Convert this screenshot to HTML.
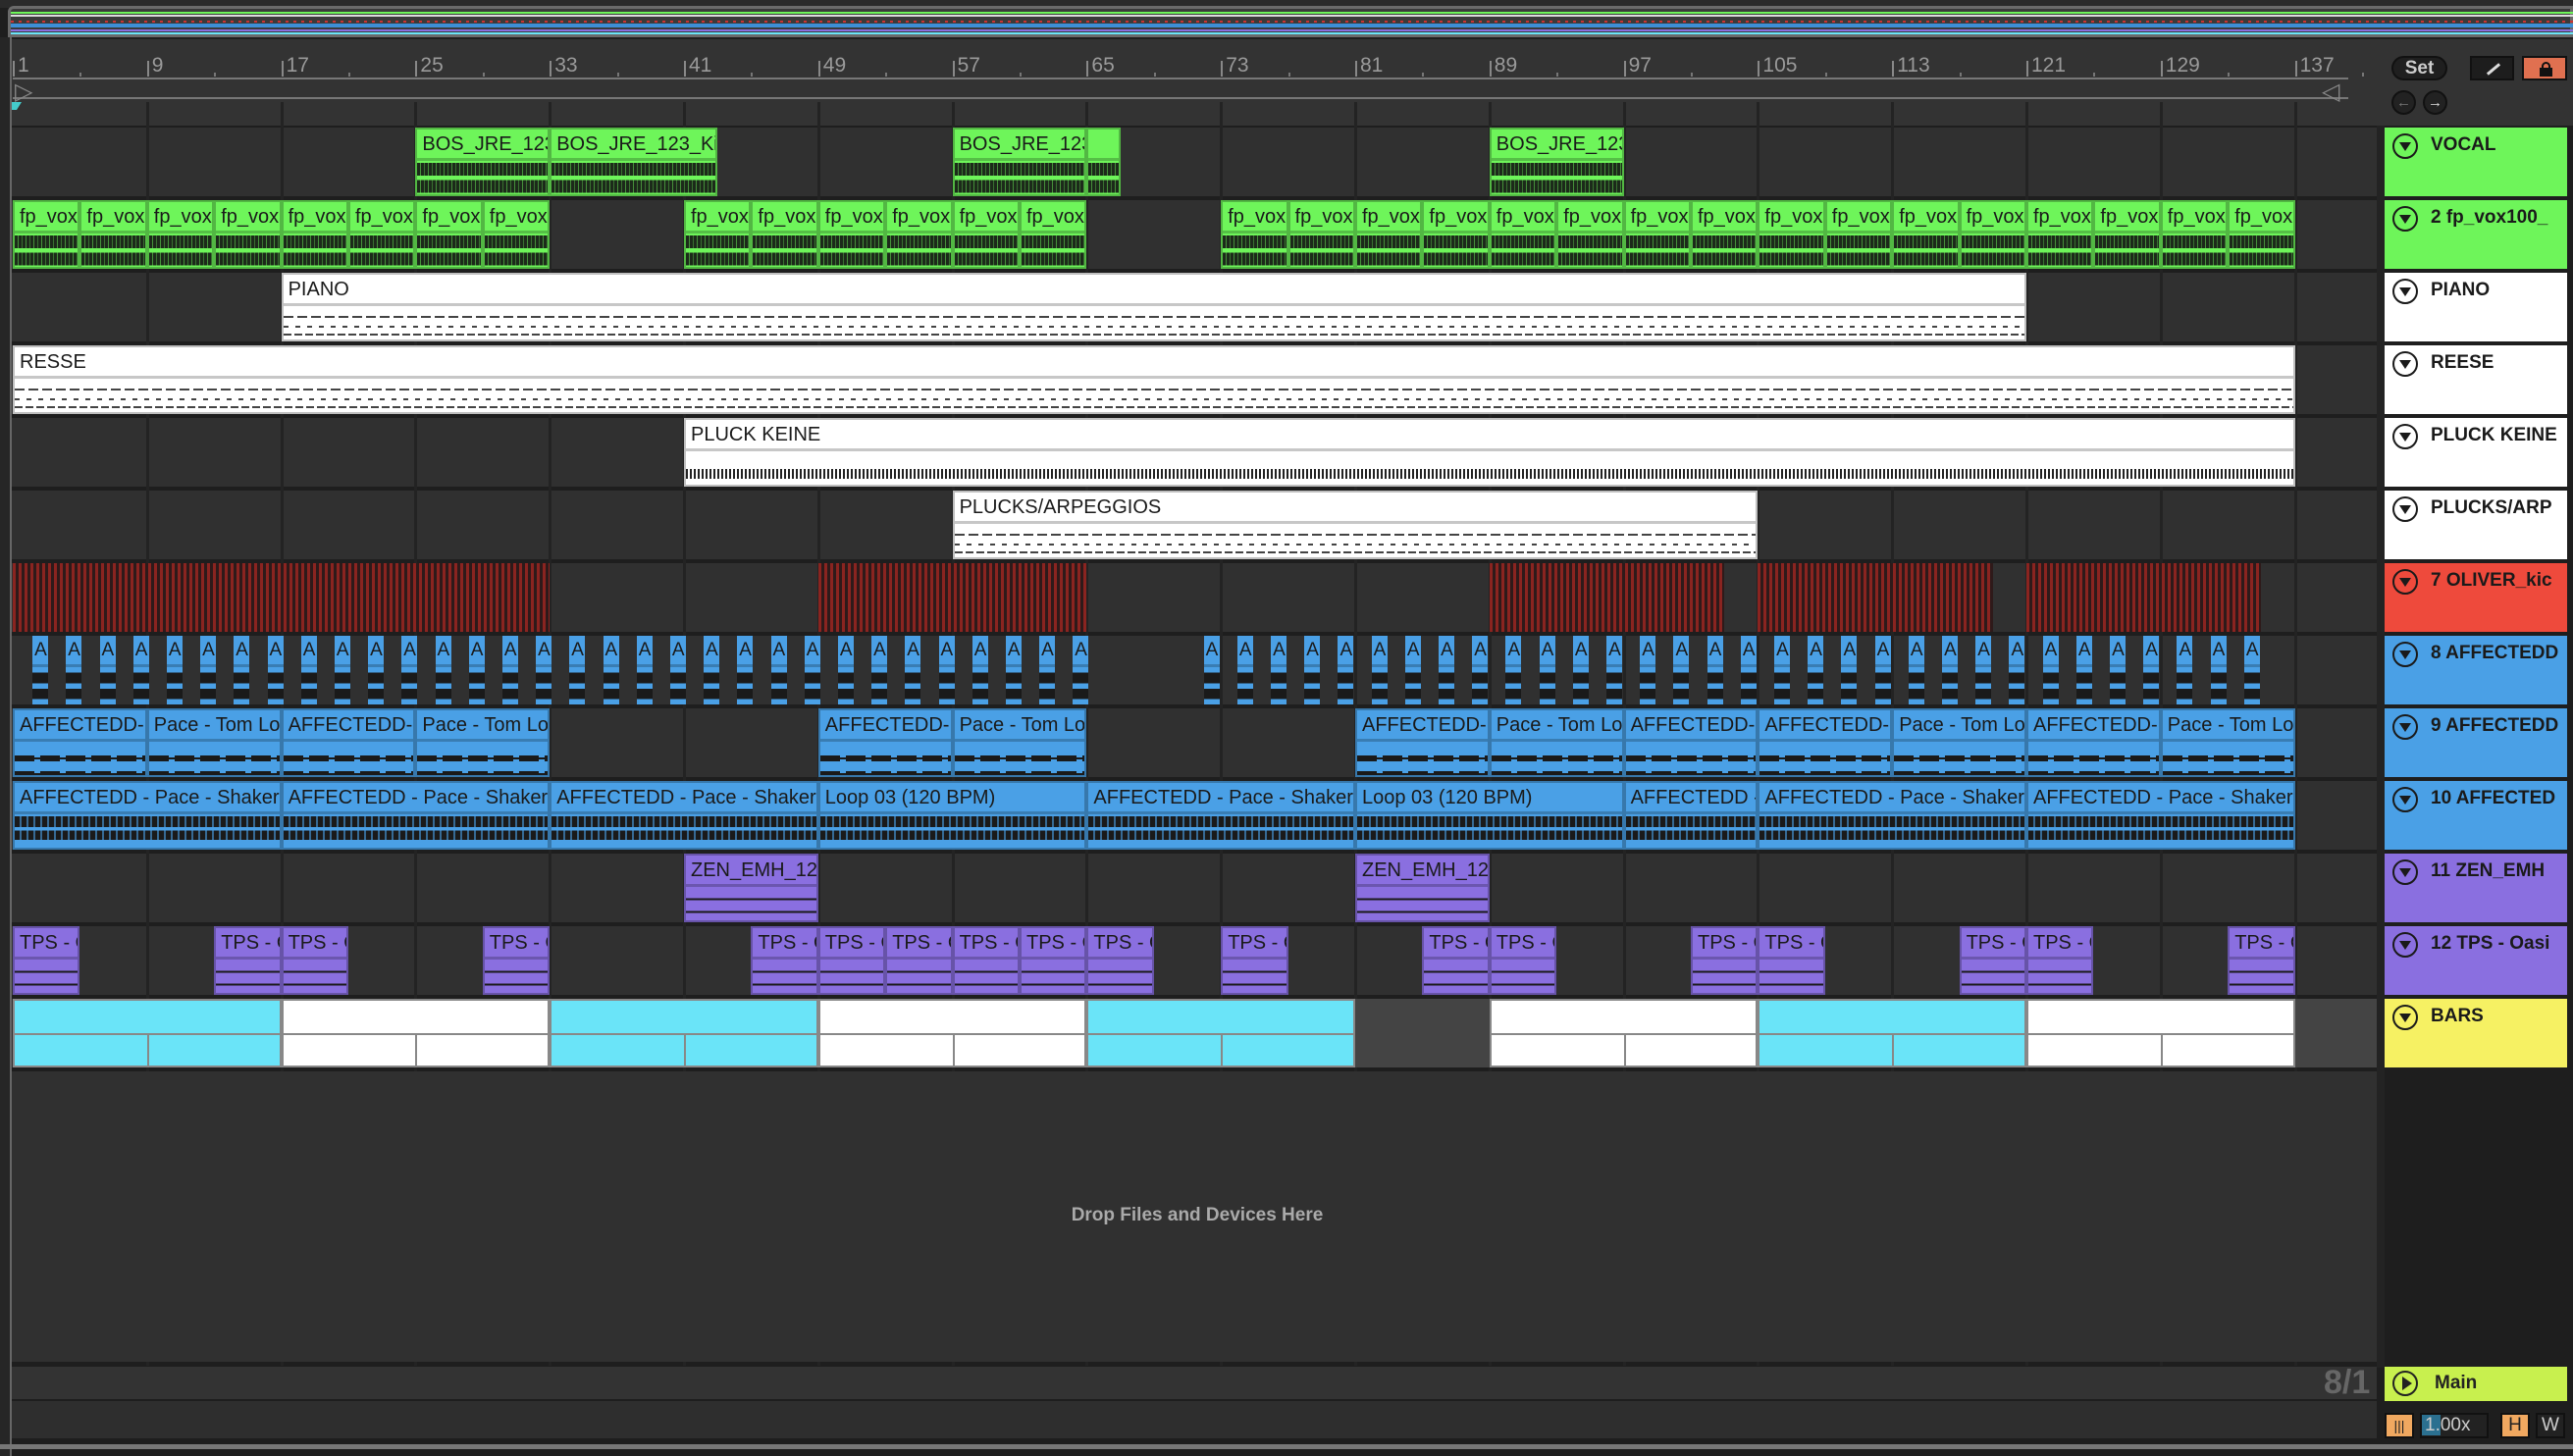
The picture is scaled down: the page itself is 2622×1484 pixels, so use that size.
<!DOCTYPE html>
<html><head><meta charset="utf-8">
<style>
*{margin:0;padding:0;box-sizing:border-box}
body{width:2622px;height:1484px;background:#1e1e1e;position:relative;overflow:hidden;font-family:"Liberation Sans",sans-serif}
.a{position:absolute}
.clip{position:absolute;overflow:hidden;border:2px solid rgba(0,0,0,.25)}
.clip .h{height:32px;line-height:30px;font-size:20px;padding-left:5px;white-space:nowrap;overflow:hidden;color:#1a1a1a;border-bottom:3px solid rgba(0,0,0,.22)}
.clip .w{position:absolute;left:0;right:0;top:34px;bottom:0}
.th{position:absolute;left:2430px;width:186px;height:70px;font-weight:bold;font-size:19px;color:#1a1a1a}
.th .c{position:absolute;left:8px;top:6px;width:26px;height:26px;border:2.5px solid #1a1a1a;border-radius:50%}
.th .c:after{content:"";position:absolute;left:5px;top:7px;border-left:6px solid transparent;border-right:6px solid transparent;border-top:9px solid #1a1a1a}
.th span{position:absolute;left:47px;top:7px;white-space:nowrap}
.rn{position:absolute;top:55px;font-size:21px;color:#9a9a9a}
.tn{position:absolute;top:1432px;font-size:20px;color:#9a9a9a}
</style></head><body>
<div class="a" style="left:0;top:0;width:2622px;height:8px;background:#2a2a2a"></div>
<div class="a" style="left:8px;top:6px;width:2614px;height:32px;background:#3a3a3a;border:3px solid #6a6a6a;border-radius:6px 0 0 0"></div>
<div class="a" style="left:11px;top:12px;width:2611px;height:2px;background:#6ef55a"></div>
<div class="a" style="left:11px;top:15px;width:2611px;height:2px;background:#ddd"></div>
<div class="a" style="left:11px;top:21px;width:2611px;height:2px;background:repeating-linear-gradient(90deg,#c33 0 3px,transparent 3px 8px)"></div>
<div class="a" style="left:11px;top:24px;width:2611px;height:4px;background:#3d8fd6"></div>
<div class="a" style="left:11px;top:30px;width:2611px;height:2px;background:#8a6fe0"></div>
<div class="a" style="left:11px;top:33px;width:2611px;height:2px;background:#6ae4f8"></div>
<div class="a" style="left:0;top:38px;width:12px;height:1446px;background:#262626;border-right:2px solid #666"></div>
<div class="a" style="left:12px;top:40px;width:2410px;height:88px;background:#333"></div>
<div class="a" style="left:13px;top:79px;width:2380px;height:22px;border:2px solid #777;border-width:2px 0"></div>
<div class="a" style="left:15px;top:79px;color:#888;font-size:24px">&#9655;</div>
<div class="a" style="left:2366px;top:79px;color:#888;font-size:24px">&#9665;</div>
<div class="a" style="left:12px;top:104px;width:0;height:0;border-left:5px solid #4cc;border-right:5px solid transparent;border-top:8px solid #4cc"></div>
<div id="lanes"></div>
<div class="a" style="left:12px;top:1092px;width:2410px;height:296px;background:#303030"></div>
<div class="a" style="left:1220px;top:1228px;width:0"><div style="position:absolute;transform:translateX(-50%);white-space:nowrap;color:#aaa;font-size:19px;font-weight:bold">Drop Files and Devices Here</div></div>
<div class="a" style="left:12px;top:1393px;width:2410px;height:33px;background:#333"></div>
<div class="a" style="left:2368px;top:1390px;font-size:34px;font-weight:bold;color:#666">8/1</div>
<div class="a" style="left:12px;top:1428px;width:2410px;height:38px;background:#2e2e2e"></div>
<div class="a" style="left:0;top:1472px;width:2622px;height:5px;background:#777"></div>
<div class="a" style="left:2422px;top:40px;width:200px;height:88px;background:#333"></div>
<div class="a" style="left:2437px;top:57px;width:57px;height:25px;border-radius:13px;background:#1f1f1f;border:2px solid #111;color:#ccc;font-size:19px;text-align:center;line-height:21px;font-weight:bold">Set</div>
<div class="a" style="left:2517px;top:57px;width:45px;height:25px;background:#1d1d1d;border:2px solid #111"><div style="position:absolute;left:14px;top:10px;width:16px;height:3px;background:#ddd;transform:rotate(-40deg)"></div></div>
<div class="a" style="left:2570px;top:57px;width:46px;height:25px;background:#e07050;border:2px solid #111"><div style="position:absolute;left:16px;top:10px;width:13px;height:9px;background:#111"></div><div style="position:absolute;left:18px;top:4px;width:9px;height:8px;border:2px solid #111;border-radius:5px 5px 0 0"></div></div>
<div class="a" style="left:2437px;top:92px;width:25px;height:25px;border-radius:50%;background:#222;border:2px solid #111;color:#777;font-size:15px;text-align:center;line-height:21px">&#8592;</div>
<div class="a" style="left:2469px;top:92px;width:25px;height:25px;border-radius:50%;background:#222;border:2px solid #111;color:#ddd;font-size:15px;text-align:center;line-height:21px">&#8594;</div>
<div class="a" style="left:2430px;top:1393px;width:186px;height:35px;background:#c8f04e"><div style="position:absolute;left:8px;top:4px;width:26px;height:26px;border:2.5px solid #222;border-radius:50%"></div><div style="position:absolute;left:18px;top:10px;border-top:7px solid transparent;border-bottom:7px solid transparent;border-left:10px solid #222"></div><span style="position:absolute;left:51px;top:6px;font-size:19px;font-weight:bold;color:#222">Main</span></div>
<div class="a" style="left:2430px;top:1440px;width:30px;height:26px;background:#f0a860;border:2px solid #111;color:#222;font-size:14px;text-align:center;line-height:22px">|||</div>
<div class="a" style="left:2466px;top:1440px;width:70px;height:26px;background:#222;border:2px solid #111;color:#ccc;font-size:19px;line-height:22px"><span style="background:#2b7090;padding-left:3px">1.</span>00x</div>
<div class="a" style="left:2548px;top:1440px;width:30px;height:26px;background:#f0a860;border:2px solid #111;color:#222;font-size:19px;text-align:center;line-height:22px">H</div>
<div class="a" style="left:2584px;top:1440px;width:30px;height:26px;background:#222;border:2px solid #111;color:#ccc;font-size:19px;text-align:center;line-height:22px">W</div>
<script>
var B=function(b){return 13+(b-1)*17.1};
var H='';
var tops=[];for(var k=0;k<13;k++)tops.push(130+74*k);
for(var k=0;k<13;k++){H+='<div class="a" style="left:12px;top:'+tops[k]+'px;width:2410px;height:70px;background:#303030"></div>';}
for(var b=9;b<=137;b+=8){H+='<div class="a" style="left:'+(B(b)-1)+'px;top:104px;width:3px;height:1288px;background:#232323"></div>';}
H+='<div class="a" style="left:2422px;top:104px;width:8px;height:1290px;background:#232323"></div>';
for(var b=1;b<=137;b+=8){H+='<div class="rn" style="left:'+(B(b)+5)+'px">'+b+'</div><div class="a" style="left:'+B(b)+'px;top:62px;width:2px;height:16px;background:#888"></div><div class="a" style="left:'+B(b+4)+'px;top:74px;width:2px;height:4px;background:#777"></div>';}
var tl=['0:00','0:20','0:40','1:00','1:20','1:40','2:00','2:20','2:40','3:00','3:20','3:40','4:00','4:20'];
for(var i=0;i<tl.length;i++){var x=16+i*175.2;H+='<div class="tn" style="left:'+(x+4)+'px">'+tl[i]+'</div><div class="a" style="left:'+x+'px;top:1430px;width:2px;height:10px;background:#888"></div>';}
var C={g:'#6ef55a',w:'#ffffff',b:'#4aa0e6',p:'#8a6fe0'};
var noise='repeating-linear-gradient(90deg,rgba(0,0,0,0) 0 3px,rgba(110,245,90,.5) 3px 4px,rgba(0,0,0,0) 4px 7px,rgba(110,245,90,.35) 7px 8px)';
function clip(k,b1,b2,name,c){var l=B(b1),r=B(b2);var wv='';
 if(c=='g')wv='<div class="w" style="background:'+noise+',linear-gradient(180deg,#1c2a1a 0 40%,#6ef55a 40% 55%,#1c2a1a 55% 95%,#6ef55a 95%)"></div>';
 if(c=='w')wv='<div class="w" style="top:42px;height:2px;background:repeating-linear-gradient(90deg,#444 0 10px,#fff 10px 14px)"></div><div class="w" style="top:52px;height:2px;background:repeating-linear-gradient(90deg,#444 0 5px,#fff 5px 12px)"></div><div class="w" style="top:60px;height:2px;background:repeating-linear-gradient(90deg,#444 0 8px,#fff 8px 11px)"></div>';
 if(c=='b')wv='<div class="w" style="top:46px;height:6px;background:repeating-linear-gradient(90deg,#1a1a1a 0 20px,#4aa0e6 20px 26px)"></div><div class="w" style="top:48px;height:2px;background:#1a1a1a"></div><div class="w" style="top:62px;height:6px;background:repeating-linear-gradient(90deg,#1a1a1a 0 20px,#4aa0e6 20px 26px)"></div><div class="w" style="top:64px;height:2px;background:#1a1a1a"></div>';
 if(c=='p')wv='<div class="w" style="background:linear-gradient(180deg,#8a6fe0 30%,#1a1a1a 30% 36%,#8a6fe0 36% 70%,#1a1a1a 70% 76%,#8a6fe0 76%)"></div>';
 H+='<div class="clip" style="left:'+l+'px;top:'+tops[k]+'px;width:'+(r-l)+'px;height:70px;background:'+C[c]+'"><div class="h">'+name+'</div>'+wv+'</div>';}
clip(0,25,33,'BOS_JRE_123','g');clip(0,33,43,'BOS_JRE_123_Ki','g');clip(0,57,65,'BOS_JRE_123_Ki','g');clip(0,65,67,'','g');clip(0,89,97,'BOS_JRE_123','g');
[[1,33],[41,65],[73,137]].forEach(function(s){for(var b=s[0];b<s[1];b+=4)clip(1,b,b+4,'fp_vox','g');});
clip(2,17,121,'PIANO','w');clip(3,1,137,'RESSE','w');
H+='<div class="clip" style="left:'+B(41)+'px;top:'+tops[4]+'px;width:'+(B(137)-B(41))+'px;height:70px;background:#fff"><div class="h">PLUCK KEINE</div><div class="w" style="top:50px;bottom:6px;background:repeating-linear-gradient(90deg,#222 0 2px,#fff 2px 4px)"></div></div>';
clip(5,57,105,'PLUCKS/ARPEGGIOS','w');
[[1,33],[49,65],[89,103],[105,119],[121,135]].forEach(function(s){var l=B(s[0]),r=B(s[1]);H+='<div class="a" style="left:'+l+'px;top:'+tops[6]+'px;width:'+(r-l)+'px;height:70px;background:repeating-linear-gradient(90deg,#8a2420 0 3px,#2e1a1a 3px 6px)"></div>';});
function aclip(b){var l=B(b)+3,w=16;H+='<div class="clip" style="left:'+l+'px;top:'+tops[7]+'px;width:'+w+'px;height:70px;background:#4aa0e6;border:none"><div class="h" style="padding-left:2px;font-size:19px">A</div><div class="w" style="background:linear-gradient(180deg,#4aa0e6 10%,#1a1a1a 10% 40%,#4aa0e6 40% 55%,#1a1a1a 55% 85%,#4aa0e6 85%)"></div></div>';}
for(var b=2;b<65;b+=2)aclip(b);for(var b=73;b<137;b+=2)aclip(b-1.2);
var t9=[[1,'AFFECTEDD-'],[9,'Pace - Tom Loc'],[17,'AFFECTEDD-'],[25,'Pace - Tom Loc'],[49,'AFFECTEDD-'],[57,'Pace - Tom Loc'],[81,'AFFECTEDD-'],[89,'Pace - Tom Loc'],[97,'AFFECTEDD-'],[105,'AFFECTEDD-'],[113,'Pace - Tom Loc'],[121,'AFFECTEDD-'],[129,'Pace - Tom Loc']];
t9.forEach(function(t){clip(8,t[0],t[0]+8,t[1],'b');});
var t10=[[1,17,'AFFECTEDD - Pace - Shaker'],[17,33,'AFFECTEDD - Pace - Shaker'],[33,49,'AFFECTEDD - Pace - Shaker'],[49,65,'Loop 03 (120 BPM)'],[65,81,'AFFECTEDD - Pace - Shaker'],[81,97,'Loop 03 (120 BPM)'],[97,105,'AFFECTEDD -'],[105,121,'AFFECTEDD - Pace - Shaker'],[121,137,'AFFECTEDD - Pace - Shaker']];
t10.forEach(function(t){var l=B(t[0]),r=B(t[1]);H+='<div class="clip" style="left:'+l+'px;top:'+tops[9]+'px;width:'+(r-l)+'px;height:70px;background:#4aa0e6"><div class="h">'+t[2]+'</div><div class="w" style="background:repeating-linear-gradient(90deg,rgba(0,0,0,0) 0 5px,rgba(74,160,230,.6) 5px 7px),linear-gradient(180deg,#1a1a1a 0 35%,#4aa0e6 35% 45%,#1a1a1a 45% 75%,#4aa0e6 75%)"></div></div>';});
clip(10,41,49,'ZEN_EMH_12','p');clip(10,81,89,'ZEN_EMH_12','p');
[1,13,17,29,45,49,53,57,61,65,73,85,89,101,105,117,121,133].forEach(function(b){clip(11,b,b+4,'TPS - O','p');});
var bars=[[1,17,'#6ae4f8'],[17,33,'#fff'],[33,49,'#6ae4f8'],[49,65,'#fff'],[65,81,'#6ae4f8'],[89,105,'#fff'],[105,121,'#6ae4f8'],[121,137,'#fff']];
H+='<div class="a" style="left:'+B(81)+'px;top:'+tops[12]+'px;width:'+(B(89)-B(81))+'px;height:70px;background:#444"></div>';
H+='<div class="a" style="left:'+B(137)+'px;top:'+tops[12]+'px;width:'+(2422-B(137))+'px;height:70px;background:#444"></div>';
bars.forEach(function(t){var l=B(t[0]),r=B(t[1]);H+='<div class="a" style="left:'+l+'px;top:'+tops[12]+'px;width:'+(r-l)+'px;height:70px;background:'+t[2]+';border:2px solid #888"><div style="position:absolute;left:0;right:0;top:33px;height:2px;background:#888"></div><div style="position:absolute;left:50%;top:35px;bottom:0;width:2px;background:#888"></div></div>';});
var hd=[['VOCAL','#6ef55a'],['2 fp_vox100_','#6ef55a'],['PIANO','#fff'],['REESE','#fff'],['PLUCK KEINE','#fff'],['PLUCKS/ARP','#fff'],['7 OLIVER_kic','#ee4a3c'],['8 AFFECTEDD','#4aa0e6'],['9 AFFECTEDD','#4aa0e6'],['10 AFFECTED','#4aa0e6'],['11 ZEN_EMH','#8a6fe0'],['12 TPS - Oasi','#8a6fe0'],['BARS','#f6f163']];
hd.forEach(function(h,k){H+='<div class="th" style="top:'+tops[k]+'px;background:'+h[1]+'"><div class="c"></div><span>'+h[0]+'</span></div>';});
document.getElementById('lanes').innerHTML=H;
</script>
</body></html>
